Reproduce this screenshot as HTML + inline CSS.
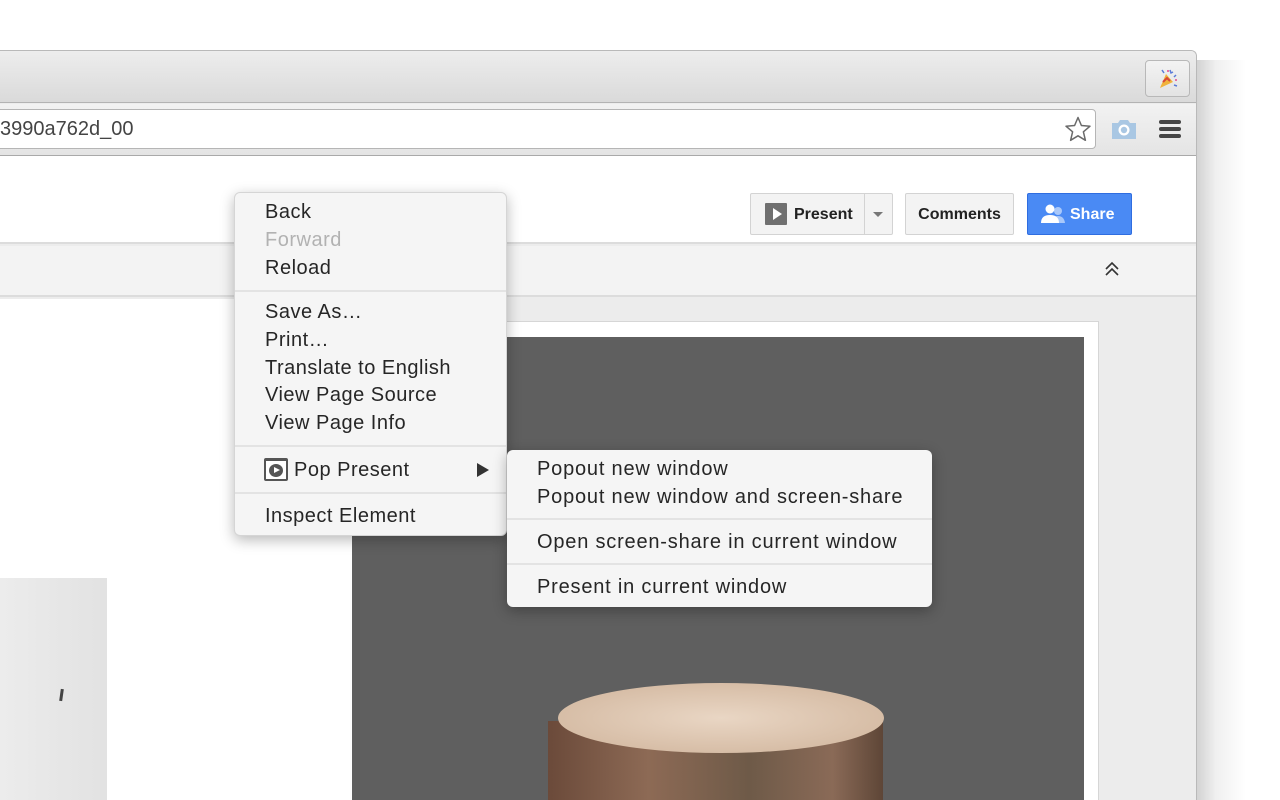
<!DOCTYPE html>
<html><head><meta charset="utf-8"><style>
*{margin:0;padding:0;box-sizing:border-box}
body{width:1280px;height:800px;overflow:hidden;background:#fff;position:relative;font-family:"Liberation Sans",Arial,sans-serif}
.a{position:absolute}
.mi{position:absolute;left:30px;font-size:20px;color:#262626;line-height:28px;white-space:nowrap;letter-spacing:.5px}
.sep{position:absolute;left:0;right:0;height:2px;background:#e3e3e3}
</style></head><body>
<div class="a" style="left:1196px;top:60px;width:50px;height:740px;background:linear-gradient(90deg,rgba(0,0,0,.18),rgba(0,0,0,.06) 40%,rgba(0,0,0,0))"></div>
<div class="a" style="left:-11px;top:50px;width:1208px;height:750px;border:1px solid #b9b9b9;border-bottom:none;border-radius:0 6px 0 0;background:#ececec;overflow:hidden">
 <div class="a" style="left:0;top:0;width:100%;height:52px;background:linear-gradient(#ededed,#dadada);border-bottom:1px solid #b3b3b3"></div>
 <div class="a" style="left:1155px;top:9px;width:45px;height:37px;border:1px solid #b8b8b8;border-radius:4px;background:linear-gradient(#f3f3f3,#e3e3e3);text-align:center">
  <svg width="24" height="24" viewBox="0 0 24 24" style="margin-top:6px"><path d="M4 21 L10 7 L17 15 Z" fill="#f0b33c"/><path d="M7 15 L11 11 L14 14" stroke="#d8473a" stroke-width="2" fill="none"/><path d="M6 3 l2 3 M14 3 l1 3 l2-1 M20 8 l-2 2 M18 18 l3 1" stroke="#5a7bd8" stroke-width="1.5" fill="none"/><circle cx="12" cy="4" r="1" fill="#e84a8e"/><circle cx="20" cy="13" r="1" fill="#e84a8e"/></svg>
 </div>
 <div class="a" style="left:0;top:53px;width:100%;height:52px;background:linear-gradient(#f2f2f2,#e4e4e4);border-bottom:1px solid #a9a9a9"></div>
 <div class="a" style="left:-5px;top:58px;width:1111px;height:40px;background:#fff;border:1px solid #b5b5b5;border-radius:4px"></div>
 <div class="a" style="left:10px;top:66px;font-size:20px;color:#444;line-height:24px">3990a762d_00</div>
 <svg class="a" style="left:1074px;top:65px" width="28" height="26" viewBox="0 0 28 26"><path d="M14 1.5 L17.4 9.5 L26 10.2 L19.4 15.8 L21.4 24.3 L14 19.8 L6.6 24.3 L8.6 15.8 L2 10.2 L10.6 9.5 Z" fill="none" stroke="#6a6a6a" stroke-width="1.5" stroke-linejoin="round"/></svg>
 <svg class="a" style="left:1120px;top:66px" width="28" height="24" viewBox="0 0 28 24"><path d="M2 6 h6 l2-3 h8 l2 3 h6 v16 h-24 Z" fill="#a9c7e3"/><circle cx="14" cy="13" r="5.5" fill="#fff"/><circle cx="14" cy="13" r="3.2" fill="#a9c7e3"/></svg>
 <div class="a" style="left:1169px;top:69px;width:22px;height:4px;border-radius:2px;background:#454545"></div>
 <div class="a" style="left:1169px;top:76px;width:22px;height:4px;border-radius:2px;background:#454545"></div>
 <div class="a" style="left:1169px;top:83px;width:22px;height:4px;border-radius:2px;background:#454545"></div>
 <div class="a" style="left:0;top:105px;width:100%;height:88px;background:#fff;border-bottom:2px solid #dcdcdc"></div>
 <div class="a" style="left:760px;top:142px;width:143px;height:42px;border:1px solid #d3d3d3;border-radius:2px;background:#f3f3f3"></div>
 <div class="a" style="left:874px;top:142px;width:1px;height:42px;background:#d3d3d3"></div>
 <div class="a" style="left:775px;top:152px;width:22px;height:22px;background:#707070;border-radius:1px"></div>
 <div class="a" style="left:783px;top:157px;width:0;height:0;border-left:9px solid #fff;border-top:6px solid transparent;border-bottom:6px solid transparent"></div>
 <div class="a" style="left:804px;top:155px;font-size:16px;font-weight:bold;color:#222">Present</div>
 <div class="a" style="left:883px;top:161px;border-top:5px solid #777;border-left:5px solid transparent;border-right:5px solid transparent"></div>
 <div class="a" style="left:915px;top:142px;width:109px;height:42px;border:1px solid #d3d3d3;border-radius:2px;background:#f3f3f3;font-size:16px;font-weight:bold;color:#222;text-align:center;line-height:42px">Comments</div>
 <div class="a" style="left:1037px;top:142px;width:105px;height:42px;border:1px solid #2f6de0;border-radius:2px;background:#4a8af4;font-size:16px;font-weight:bold;color:#fff;line-height:42px;padding-left:42px">Share</div>
 <svg class="a" style="left:1050px;top:152px" width="28" height="22" viewBox="0 0 28 22"><circle cx="18" cy="8" r="4" fill="#a9c8fa"/><path d="M12 20 q1-7 6-7 q6 0 7 7 Z" fill="#a9c8fa"/><circle cx="10" cy="6" r="4.5" fill="#fff"/><path d="M1 20 q0-8 9-8 q9 0 9 8 Z" fill="#fff"/></svg>
 <div class="a" style="left:0;top:195px;width:100%;height:51px;background:#f3f3f3;border-bottom:2px solid #dcdcdc"></div>
 <svg class="a" style="left:1114px;top:210px" width="16" height="16" viewBox="0 0 16 16"><path d="M2 8 L8 2 L14 8 M2 14 L8 8 L14 14" fill="none" stroke="#333" stroke-width="1.6"/></svg>
 <div class="a" style="left:0;top:248px;width:100%;height:520px;background:#ececec"></div>
 <div class="a" style="left:0;top:270px;width:1109px;height:520px;background:#fff;border:1px solid #d6d6d6"></div>
 <div class="a" style="left:0;top:248px;width:360px;height:30px;background:#fff"></div>
 <div class="a" style="left:362px;top:286px;width:732px;height:480px;background:#5f5f5f"></div>
 <div class="a" style="left:558px;top:670px;width:335px;height:100px;background:linear-gradient(90deg,#6b4a3a,#8d6a55 30%,#6e5a48 60%,#8a6a57 85%,#5e4637)"></div>
 <div class="a" style="left:568px;top:632px;width:326px;height:70px;border-radius:50%;background:radial-gradient(#e9d6c4,#cfb39a)"></div>
 <div class="a" style="left:10px;top:527px;width:107px;height:240px;background:linear-gradient(90deg,#ececec,#e2e2e2)"></div>
 <div class="a" style="left:70px;top:638px;width:3px;height:12px;background:#444;transform:rotate(8deg)"></div>
</div>
<div class="a" style="left:234px;top:192px;width:273px;height:344px;background:#f5f5f5;border:1px solid #d5d5d5;border-radius:6px;box-shadow:0 4px 14px rgba(0,0,0,.28)">
 <div class="mi" style="top:5px">Back</div>
 <div class="mi" style="top:33px;color:#b2b2b2">Forward</div>
 <div class="mi" style="top:61px">Reload</div>
 <div class="sep" style="top:97px"></div>
 <div class="mi" style="top:105px">Save As…</div>
 <div class="mi" style="top:133px">Print…</div>
 <div class="mi" style="top:161px">Translate to English</div>
 <div class="mi" style="top:188px">View Page Source</div>
 <div class="mi" style="top:216px">View Page Info</div>
 <div class="sep" style="top:252px"></div>
 <div class="a" style="left:29px;top:265px;width:24px;height:23px;border:2px solid #555;border-top-width:3px;border-radius:2px;background:#fff"></div>
 <div class="a" style="left:34px;top:271px;width:14px;height:13px;border-radius:50%;background:#555"></div>
 <div class="a" style="left:39px;top:274px;border-left:6px solid #fff;border-top:3.5px solid transparent;border-bottom:3.5px solid transparent"></div>
 <div class="mi" style="top:263px;left:59px">Pop Present</div>
 <div class="a" style="left:242px;top:270px;border-left:12px solid #333;border-top:7px solid transparent;border-bottom:7px solid transparent"></div>
 <div class="sep" style="top:299px"></div>
 <div class="mi" style="top:309px">Inspect Element</div>
</div>
<div class="a" style="left:507px;top:450px;width:425px;height:157px;background:#f5f5f5;border-radius:6px;box-shadow:0 4px 14px rgba(0,0,0,.3)">
 <div class="mi" style="top:5px;letter-spacing:.8px">Popout new window</div>
 <div class="mi" style="top:33px;letter-spacing:.8px">Popout new window and screen-share</div>
 <div class="sep" style="top:68px"></div>
 <div class="mi" style="top:78px;letter-spacing:.8px">Open screen-share in current window</div>
 <div class="sep" style="top:113px"></div>
 <div class="mi" style="top:123px;letter-spacing:.8px">Present in current window</div>
</div>
</body></html>
